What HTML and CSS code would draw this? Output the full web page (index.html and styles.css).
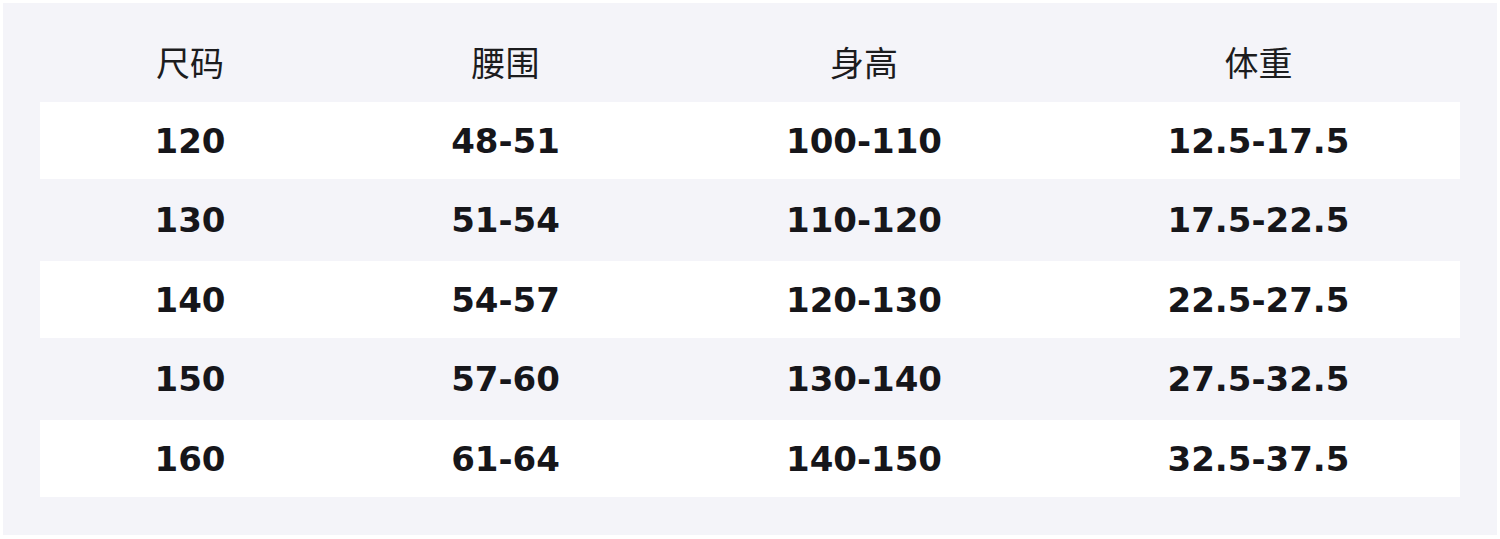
FILE: index.html
```html
<!DOCTYPE html>
<html lang="zh">
<head>
<meta charset="utf-8">
<link rel="stylesheet" href="styles.css">
</head>
<body>
<div class="panel">
  <table class="size-table">
    <colgroup>
      <col class="c1"><col class="c2"><col class="c3"><col class="c4">
    </colgroup>
    <thead>
      <tr><th>尺码</th><th>腰围</th><th>身高</th><th>体重</th></tr>
    </thead>
    <tbody>
      <tr class="light"><td>120</td><td>48-51</td><td>100-110</td><td>12.5-17.5</td></tr>
      <tr class="shade"><td>130</td><td>51-54</td><td>110-120</td><td>17.5-22.5</td></tr>
      <tr class="light"><td>140</td><td>54-57</td><td>120-130</td><td>22.5-27.5</td></tr>
      <tr class="shade"><td>150</td><td>57-60</td><td>130-140</td><td>27.5-32.5</td></tr>
      <tr class="light"><td>160</td><td>61-64</td><td>140-150</td><td>32.5-37.5</td></tr>
    </tbody>
  </table>
</div>
</body>
</html>
```
FILE: styles.css
```css
html, body {
  margin: 0;
  padding: 0;
  background: #ffffff;
}
body {
  padding: 3px;
}
.panel {
  width: 1494px;
  height: 532px;
  box-sizing: border-box;
  background: #f4f4f9;
  padding: 17px 37px 0 37px;
}
.size-table {
  width: 1420px;
  border-collapse: collapse;
  table-layout: fixed;
}
.c1 { width: 300px; }
.c2 { width: 331px; }
.c3 { width: 386px; }
.c4 { width: 403px; }
.size-table th {
  height: 82px;
  padding: 0;
  font-family: "Noto Sans CJK SC", "Noto Sans", sans-serif;
  font-weight: 400;
  font-size: 34px;
  color: #1c1c1e;
  text-align: center;
  vertical-align: middle;
}
.size-table td {
  padding: 0;
  font-family: "DejaVu Sans", "Noto Sans CJK SC", sans-serif;
  font-weight: 700;
  font-size: 34px;
  color: #16161a;
  text-align: center;
  vertical-align: middle;
}
.light td {
  height: 77px;
  background: #ffffff;
}
.shade td {
  height: 82px;
  background: transparent;
}
```
